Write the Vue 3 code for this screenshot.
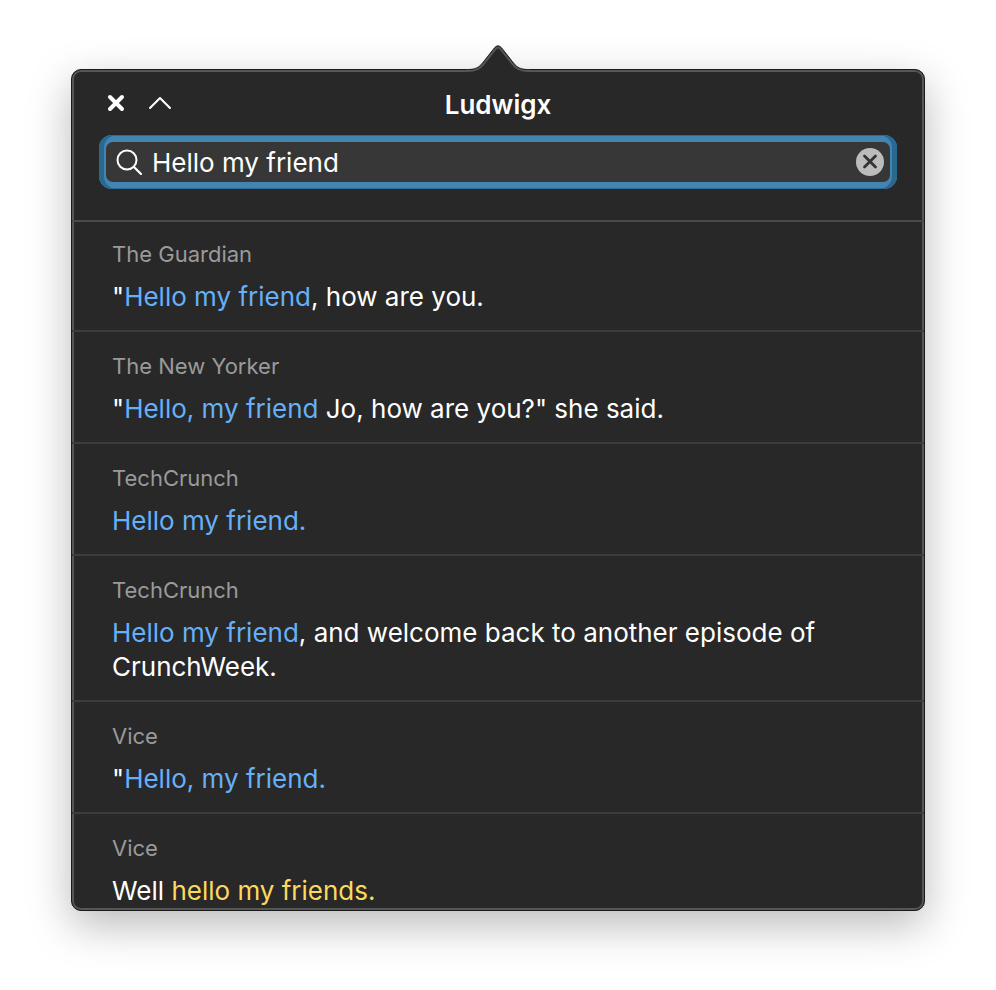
<script setup>
import { ref } from 'vue'

const query = ref('Hello my friend')

const results = [
  { source: 'The Guardian', before: '"', match: 'Hello my friend', after: ', how are you.' },
  { source: 'The New Yorker', before: '"', match: 'Hello, my friend', after: ' Jo, how are you?" she said.' },
  { source: 'TechCrunch', before: '', match: 'Hello my friend.', after: '' },
  { source: 'TechCrunch', before: '', match: 'Hello my friend', after: ', and welcome back to another episode of CrunchWeek.' },
  { source: 'Vice', before: '"', match: 'Hello, my friend.', after: '' },
  { source: 'Vice', before: 'Well ', match: 'hello my friends.', after: '', similar: true },
]
</script>

<template>
  <div class="page">
    <main class="popover">
      <svg class="arrow" width="64" height="29" viewBox="0 0 64 29" aria-hidden="true">
        <path d="M0 29V25.500H2C9 25.500 13 23.500 16.500 19L28.500 3.800Q32 -0.200 35.500 3.800L47.500 19C51 23.500 55 25.500 62 25.500H64V29Z" fill="#282828" />
        <path d="M0 27H2C9.500 27 14 25 17.600 20L29.600 4.900Q32 2.200 34.400 4.900L46.400 20C50 25 54.500 27 62 27H64" fill="none" stroke="#555656" stroke-width="2" />
        <path d="M0 25.500H2C9 25.500 13 23.500 16.500 19L28.500 3.800Q32 -0.200 35.500 3.800L47.500 19C51 23.500 55 25.500 62 25.500H64" fill="none" stroke="#2a2a2a" stroke-width="1" />
      </svg>

      <header class="header">
        <div class="titlebar">
          <div class="actions">
            <button type="button" class="icon-button" aria-label="Close">
              <svg width="20" height="20" viewBox="0 0 20 20">
                <path d="M4 4L16 16M16 4L4 16" stroke="#fff" stroke-width="4" stroke-linecap="round" />
              </svg>
            </button>
            <button type="button" class="icon-button" aria-label="Collapse">
              <svg width="24" height="20" viewBox="0 0 24 20">
                <path d="M2 15L12 5L22 15" fill="none" stroke="#fff" stroke-width="2" stroke-linecap="round" stroke-linejoin="round" />
              </svg>
            </button>
          </div>
          <h1 class="title">Ludwigx</h1>
        </div>

        <form class="search" role="search" @submit.prevent>
          <div class="field">
            <svg class="glass" width="26" height="26" viewBox="0 0 26 26" aria-hidden="true">
              <circle cx="11" cy="11" r="9.500" fill="none" stroke="#fff" stroke-width="2" />
              <path d="M18 18L25 25" stroke="#fff" stroke-width="2.200" stroke-linecap="round" />
            </svg>
            <input v-model="query" class="input" type="text" aria-label="Search" />
            <button type="button" class="icon-button" aria-label="Clear" @click="query = ''">
              <svg width="28" height="28" viewBox="0 0 28 28">
                <circle cx="14" cy="14" r="14" fill="#bcbcbc" />
                <path d="M8.500 8L19.500 19M19.500 8L8.500 19" stroke="#343434" stroke-width="2.800" stroke-linecap="round" />
              </svg>
            </button>
          </div>
        </form>
      </header>

      <ul class="results">
        <li v-for="(item, i) in results" :key="i" class="result">
          <p class="source">{{ item.source }}</p>
          <p class="quote">{{ item.before }}<span class="match" :class="{ similar: item.similar }">{{ item.match }}</span>{{ item.after }}</p>
        </li>
      </ul>
    </main>
  </div>
</template>

<style>
body {
  margin: 0;
  background: #fff;
}
</style>

<style scoped>
.page {
  box-sizing: border-box;
  display: flex;
  height: 100vh;
  padding: 69px 71px 79px;
  font-family: Inter, "Liberation Sans", sans-serif;
  color: #fff;
}

.popover {
  position: relative;
  box-sizing: border-box;
  display: flex;
  flex: 1;
  flex-direction: column;
  min-width: 0;
  border: 1px solid #1a1a1a;
  border-radius: 10px;
  background: #282828;
  box-shadow:
    inset 0 0 0 2px #555656,
    0 14px 44px rgba(0, 0, 0, 0.28);
}

.arrow {
  position: absolute;
  top: -26px;
  left: 50%;
  margin-left: -32px;
}

.header {
  padding: 18px 27px 31px;
  border-bottom: 2px solid #4a4a4a;
}

.titlebar {
  display: grid;
  grid-template-columns: 1fr auto 1fr;
  align-items: center;
  margin-bottom: 13px;
}

.actions {
  display: flex;
  gap: 22px;
  padding: 0 0 4px 7px;
}

.title {
  margin: 0;
  font-size: 26px;
  font-weight: 600;
  line-height: 34px;
}

.icon-button {
  display: flex;
  padding: 0;
  border: 0;
  background: none;
  cursor: pointer;
}

.search {
  padding: 7px;
  border-radius: 13px;
  background: #4484b2;
  box-shadow:
    inset 5px 0 0 #2a6890,
    inset -5px 0 0 #2a6890,
    inset 0 0 0 1px #2d6c98;
}

.field {
  display: flex;
  align-items: center;
  gap: 10px;
  height: 40px;
  padding: 0 6px 0 10px;
  border-radius: 7px;
  background: #373737;
}

.input {
  flex: 1;
  min-width: 0;
  padding: 2px 0 0;
  border: 0;
  outline: 0;
  background: none;
  color: #fff;
  font: inherit;
  font-size: 26px;
  line-height: 34px;
}

.results {
  flex: 1;
  min-height: 0;
  margin: 0;
  padding: 0;
  overflow: hidden;
  list-style: none;
}

.result {
  padding: 20px 40px 16px;
  border-bottom: 2px solid #3c3c3c;
}

.result:first-child {
  padding-top: 18px;
}

.source {
  margin: 0 0 12px;
  color: #9a9a9a;
  font-size: 22px;
  line-height: 28px;
}

.quote {
  margin: 0;
  font-size: 26px;
  line-height: 34px;
}

.match {
  color: #66b0fa;
}

.match.similar {
  color: #fcd95f;
}
</style>
